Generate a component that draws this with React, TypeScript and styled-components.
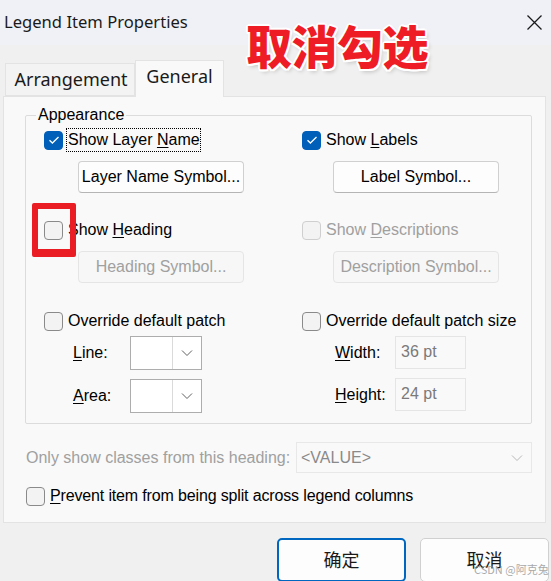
import React from 'react';
import styled, { createGlobalStyle } from 'styled-components';

const GlobalStyle = createGlobalStyle`
    html, body {
        margin: 0;
        padding: 0;
        background: #f0f0f0;
    }
`

const CheckMark = () => (
    <svg width="12" height="10" viewBox="0 0 12 10">
        <polyline points="1.5,5.2 4.4,8 10.5,2" fill="none" stroke="#fff" strokeWidth="1.3" />
    </svg>
)

const Chevron = ({ light }: { light?: boolean }) => (
    <svg width="12" height="8" viewBox="0 0 12 8">
        <polyline points="1,1.5 6,6.5 11,1.5" fill="none" stroke={light ? '#b8b8b8' : '#606060'} strokeWidth="1" />
    </svg>
)

type CheckProps = {
    checked?: boolean
    disabled?: boolean
    focused?: boolean
    space?: number
    children: React.ReactNode
}

const Check = ({ checked, disabled, focused, space = 0, children }: CheckProps) => (
    <CheckRow space={space}>
        <Box checked={checked} disabled={disabled}>{checked && <CheckMark />}</Box>
        <CheckText disabled={disabled} focused={focused}>{children}</CheckText>
    </CheckRow>
)

export default function App() {
    return (
        <Window>
            <GlobalStyle />
            <TitleBar>
                <Title>Legend Item Properties</Title>
                <Close>
                    <svg width="15" height="15" viewBox="0 0 15 15">
                        <path d="M0.5 0.5 L14.5 14.5 M14.5 0.5 L0.5 14.5" stroke="#1a1a1a" strokeWidth="1.3" />
                    </svg>
                </Close>
            </TitleBar>

            <TabStrip>
                <Tab>Arrangement</Tab>
                <Tab active>General</Tab>
            </TabStrip>

            <Panel>
                <GroupBox>
                    <Legend>Appearance</Legend>
                    <Columns>
                        <Column>
                            <Check checked focused>Show Layer <u>N</u>ame</Check>
                            <SymbolButton indent={34}>Layer Name Symbol...</SymbolButton>
                            <Check space={26}>Show <u>H</u>eading</Check>
                            <SymbolButton indent={34} disabled>Heading Symbol...</SymbolButton>
                            <Check space={27}>Override default patch</Check>
                            <FieldRow first>
                                <FieldLabel indent={29} width={57}><u>L</u>ine:</FieldLabel>
                                <Combo>
                                    <ComboValue />
                                    <ComboArrow><Chevron /></ComboArrow>
                                </Combo>
                            </FieldRow>
                            <FieldRow>
                                <FieldLabel indent={29} width={57}><u>A</u>rea:</FieldLabel>
                                <Combo>
                                    <ComboValue />
                                    <ComboArrow><Chevron /></ComboArrow>
                                </Combo>
                            </FieldRow>
                        </Column>
                        <Column>
                            <Check checked>Show <u>L</u>abels</Check>
                            <SymbolButton indent={31}>Label Symbol...</SymbolButton>
                            <Check space={26} disabled>Show <u>D</u>escriptions</Check>
                            <SymbolButton indent={31} disabled>Description Symbol...</SymbolButton>
                            <Check space={27}>Override default patch size</Check>
                            <FieldRow first>
                                <FieldLabel indent={33} width={60}><u>W</u>idth:</FieldLabel>
                                <TextField>36 pt</TextField>
                            </FieldRow>
                            <FieldRow>
                                <FieldLabel indent={33} width={60}><u>H</u>eight:</FieldLabel>
                                <TextField>24 pt</TextField>
                            </FieldRow>
                        </Column>
                    </Columns>
                </GroupBox>

                <HeadingRow>
                    <DimText>Only show classes from this heading:</DimText>
                    <WideCombo>
                        <span>&lt;VALUE&gt;</span>
                        <Chevron light />
                    </WideCombo>
                </HeadingRow>
                <PreventRow>
                    <Check><u>P</u>revent item from being split across legend columns</Check>
                </PreventRow>
            </Panel>

            <Footer>
                <DialogButton primary>确定</DialogButton>
                <DialogButton>取消</DialogButton>
            </Footer>

            <Annotation>取消勾选</Annotation>
            <Highlight />
            <Watermark>CSDN @阿克兔</Watermark>
        </Window>
    )
}

const Window = styled.div`
    position: relative;
    width: 551px;
    height: 581px;
    overflow: hidden;
    background: #f0f0f0;
    font-family: "Liberation Sans", Arial, sans-serif;
    font-size: 16px;
    color: #000;
`

const TitleBar = styled.div`
    height: 45px;
    display: flex;
    align-items: center;
    justify-content: space-between;
    padding: 0 9px 0 4px;
    background: #eff1f7;
    box-sizing: border-box;
`

const Title = styled.div`
    font-family: "Noto Sans", sans-serif;
    font-size: 16.6px;
    color: #1a1a1a;
    margin-top: -2px;
`

const Close = styled.div`
    display: flex;
    margin-top: -1px;
`

const TabStrip = styled.div`
    display: flex;
    align-items: flex-end;
    margin-top: 15px;
    padding-left: 5px;
    height: 36px;
    position: relative;
    z-index: 1;
`

const Tab = styled.div<{ active?: boolean }>`
    font-family: "Noto Sans", sans-serif;
    font-size: 18px;
    color: #1a1a1a;
    box-sizing: border-box;
    display: flex;
    justify-content: center;
    align-items: center;
    height: ${p => (p.active ? '37px' : '33px')};
    width: ${p => (p.active ? '89px' : '130px')};
    padding-bottom: ${p => (p.active ? '6px' : '1px')};
    padding-left: ${p => (p.active ? '0' : '2px')};
    background: ${p => (p.active ? '#f9f9f9' : '#f3f3f3')};
    border: 1px solid #e3e3e3;
    border-bottom: ${p => (p.active ? 'none' : '1px solid #e3e3e3')};
    margin-bottom: ${p => (p.active ? '-1px' : '0')};
`

const Panel = styled.div`
    margin: 0 5px 0 3px;
    height: 427px;
    box-sizing: border-box;
    background: #f9f9f9;
    border: 1px solid #e3e3e3;
    padding: 10px 13px 0 21px;
`

const GroupBox = styled.fieldset`
    margin: 0;
    padding: 0 0 10px 0;
    border: 1px solid #dcdcdc;
    border-radius: 2px;
    min-width: 0;
`

const Legend = styled.legend`
    margin-left: 10px;
    padding: 0 2px;
    font-size: 16px;
    line-height: 16px;
    color: #000;
`

const Columns = styled.div`
    display: grid;
    grid-template-columns: 258px 1fr;
    padding: 6px 0 0 18px;
`

const Column = styled.div`
    display: flex;
    flex-direction: column;
    align-items: flex-start;
`

const CheckRow = styled.div<{ space: number }>`
    display: flex;
    align-items: center;
    height: 22px;
    margin-top: ${p => p.space}px;
`

const Box = styled.span<{ checked?: boolean; disabled?: boolean }>`
    width: 19px;
    height: 19px;
    box-sizing: border-box;
    border-radius: 4px;
    display: flex;
    align-items: center;
    justify-content: center;
    background: ${p => (p.checked ? '#005fb8' : '#f3f3f3')};
    border: 1px solid ${p => (p.checked ? '#005fb8' : p.disabled ? '#cfcfcf' : '#8a8a8a')};
    flex-shrink: 0;
`

const CheckText = styled.span<{ disabled?: boolean; focused?: boolean }>`
    margin-left: ${p => (p.focused ? '4px' : '5px')};
    padding: ${p => (p.focused ? '2px 0 2px 1px' : '0')};
    outline: ${p => (p.focused ? '1px dotted #000' : 'none')};
    color: ${p => (p.disabled ? '#a0a0a0' : '#000')};
    white-space: nowrap;
    u {
        text-decoration-thickness: 1px;
        text-underline-offset: 2px;
    }
`

const SymbolButton = styled.button<{ indent: number; disabled?: boolean }>`
    margin: 10px 0 0 ${p => p.indent}px;
    width: 166px;
    height: 32px;
    font-family: "Liberation Sans", Arial, sans-serif;
    font-size: 16px;
    color: ${p => (p.disabled ? '#a0a0a0' : '#000')};
    background: ${p => (p.disabled ? '#f7f7f7' : '#fdfdfd')};
    border: 1px solid ${p => (p.disabled ? '#e5e5e5' : '#d0d0d0')};
    border-bottom-color: ${p => (p.disabled ? '#e5e5e5' : '#b5b5b5')};
    border-radius: 4px;
    padding: 0;
`

const FieldRow = styled.div<{ first?: boolean }>`
    display: flex;
    align-items: center;
    margin-top: ${p => (p.first ? '4px' : '9px')};
`

const FieldLabel = styled.span<{ indent: number; width: number }>`
    margin-left: ${p => p.indent}px;
    width: ${p => p.width}px;
    u {
        text-underline-offset: 2px;
    }
`

const Combo = styled.div`
    display: flex;
    width: 72px;
    height: 34px;
    box-sizing: border-box;
    background: #fff;
    border: 1px solid #adadad;
`

const ComboValue = styled.div`
    flex: 1;
    border-right: 1px solid #dadada;
`

const ComboArrow = styled.div`
    width: 28px;
    display: flex;
    align-items: center;
    justify-content: center;
`

const TextField = styled.div`
    width: 71px;
    height: 33px;
    box-sizing: border-box;
    padding: 6px 0 0 5px;
    background: #f9f9f9;
    border: 1px solid #e5e5e5;
    color: #7a7a7a;
`

const HeadingRow = styled.div`
    display: flex;
    align-items: center;
    justify-content: space-between;
    margin-top: 18px;
`

const DimText = styled.span`
    color: #a0a0a0;
    margin-left: 1px;
`

const WideCombo = styled.div`
    width: 236px;
    height: 31px;
    box-sizing: border-box;
    display: flex;
    align-items: center;
    justify-content: space-between;
    padding: 0 8px 0 4px;
    background: #f9f9f9;
    border: 1px solid #e8e8e8;
    color: #8a8a8a;
`

const PreventRow = styled.div`
    margin-top: 12px;
    margin-left: 1px;
    letter-spacing: -0.15px;
`

const Footer = styled.div`
    display: flex;
    justify-content: flex-end;
    gap: 14px;
    margin-top: 15px;
    padding-right: 2px;
`

const DialogButton = styled.button<{ primary?: boolean }>`
    width: 129px;
    height: 44px;
    box-sizing: border-box;
    font-family: "Noto Sans CJK SC", sans-serif;
    font-size: 18px;
    color: #1a1a1a;
    background: #fdfdfd;
    border: ${p => (p.primary ? '2px solid #0067c0' : '1px solid #d0d0d0')};
    border-radius: 5px;
    padding: 0 0 2px;
`

const Annotation = styled.div`
    position: absolute;
    left: 246px;
    top: 16px;
    font-family: "Noto Sans CJK SC", sans-serif;
    font-weight: 900;
    font-size: 46px;
    line-height: 56px;
    color: #ee1c25;
    letter-spacing: -0.5px;
    text-shadow:
        2px 0 #fff, -2px 0 #fff, 0 2px #fff, 0 -2px #fff,
        1.5px 1.5px #fff, -1.5px -1.5px #fff, 1.5px -1.5px #fff, -1.5px 1.5px #fff,
        2px 3px 4px rgba(0, 0, 0, 0.2);
`

const Highlight = styled.div`
    position: absolute;
    left: 32px;
    top: 203px;
    width: 44px;
    height: 54px;
    box-sizing: border-box;
    border: 6px solid #ea1d25;
    border-bottom-width: 8px;
    border-radius: 2px;
`

const Watermark = styled.div`
    position: absolute;
    left: 474px;
    top: 562px;
    font-family: "Noto Sans CJK SC", sans-serif;
    font-size: 11px;
    line-height: 14px;
    white-space: nowrap;
    color: rgba(140, 140, 140, 0.75);
`
